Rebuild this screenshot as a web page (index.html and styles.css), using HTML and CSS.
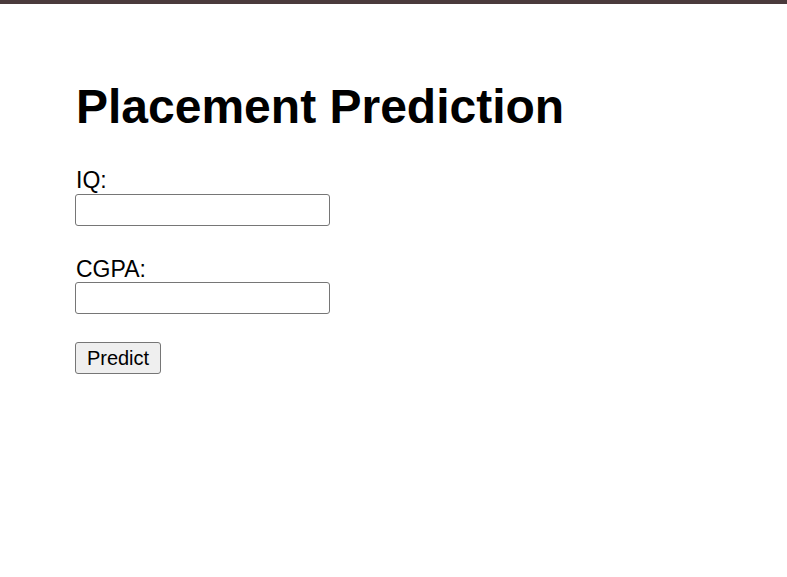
FILE: index.html
```html
<!DOCTYPE html>
<html>
<head>
<meta charset="utf-8">
<link rel="stylesheet" href="styles.css">
</head>
<body>
<div class="topbar"></div>
<main class="page">
  <h1 class="title">Placement Prediction</h1>
  <form class="form">
    <label class="label" for="iq">IQ:</label>
    <input class="field" id="iq" type="text">
    <label class="label label-gap" for="cgpa">CGPA:</label>
    <input class="field" id="cgpa" type="text">
    <button class="btn" type="button">Predict</button>
  </form>
</main>
</body>
</html>
```
FILE: styles.css
```css
html, body {
  margin: 0;
  padding: 0;
  background: #ffffff;
}
body {
  font-family: "Liberation Sans", Arial, sans-serif;
  color: #000;
}
.topbar {
  height: 4px;
  background: #4a3a3c;
}
.page {
  padding: 75px 0 0 75px;
}
.title {
  font-size: 48px;
  font-weight: bold;
  line-height: 55px;
  margin: 0 0 33px 1px;
}
.form {
  display: flex;
  flex-direction: column;
  align-items: flex-start;
}
.label {
  font-size: 23px;
  line-height: 26px;
  margin-left: 1px;
  margin-bottom: 1px;
}
.label-gap {
  margin-top: 30px;
  margin-bottom: 0;
}
.field {
  box-sizing: border-box;
  width: 255px;
  height: 32px;
  border: 1px solid #767676;
  border-radius: 3px;
  margin: 0;
  padding: 2px 4px;
  font-size: 20px;
  font-family: "Liberation Sans", Arial, sans-serif;
  background: #fff;
}
.btn {
  box-sizing: border-box;
  margin-top: 28px;
  height: 32px;
  width: 86px;
  padding: 0;
  border: 1px solid #767676;
  border-radius: 3px;
  background: #efefef;
  font-size: 20px;
  font-family: "Liberation Sans", Arial, sans-serif;
  color: #000;
}
```
